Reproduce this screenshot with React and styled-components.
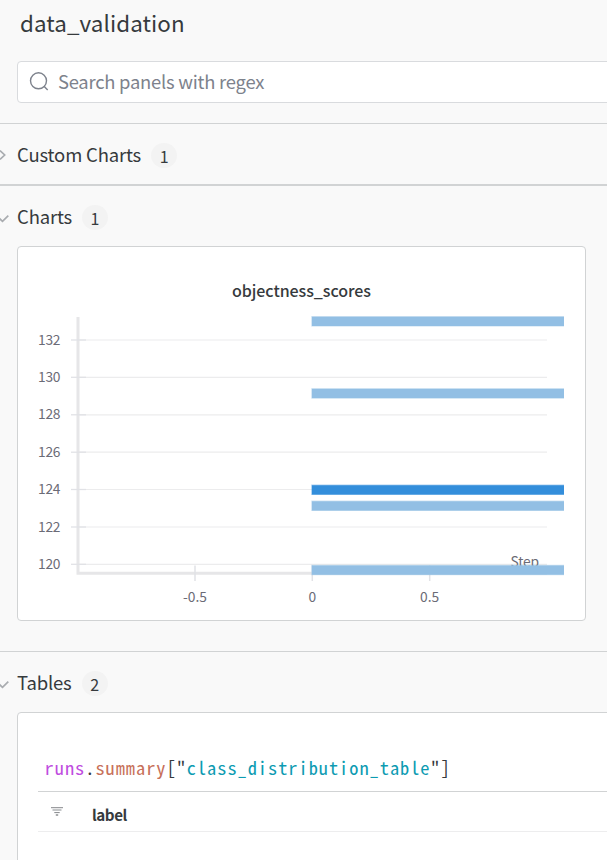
import React from "react";
import styled, { createGlobalStyle } from "styled-components";

const sans = '"Noto Sans CJK JP", "Noto Sans CJK SC", "Noto Sans", sans-serif';

const Global = createGlobalStyle`
  * { box-sizing: border-box; }
  html, body { margin: 0; background: #f9f9f9; overflow: hidden; }
  body { font-family: ${sans}; color: #363a3d; }
`;

const Page = styled.main`
  width: 607px;
  height: 860px;
  overflow: hidden;
  background: #f9f9f9;
`;

const Header = styled.header`
  height: 124px;
  border-bottom: 1px solid #d1d3d4;
`;

const Title = styled.h1`
  margin: 0;
  padding: 4px 0 0 20px;
  height: 61px;
  font-size: 22.4px;
  font-weight: 400;
  line-height: 36px;
  letter-spacing: 0.08px;
`;

const Search = styled.label`
  display: flex;
  align-items: center;
  width: 640px;
  height: 42px;
  margin-left: 17px;
  padding-left: 11px;
  border: 1px solid #d9dbde;
  border-radius: 4px;
  background: #fff;
`;

const SearchText = styled.span`
  margin-left: 8px;
  padding-bottom: 2px;
  font-size: 18.4px;
  letter-spacing: -0.24px;
  line-height: 28px;
  color: #7d828c;
`;

const Section = styled.section`
  height: ${(p) => p.$height}px;
  border-bottom: ${(p) => p.$border}px solid #d1d3d4;
`;

const SectionHead = styled.div`
  display: flex;
  align-items: center;
  height: ${(p) => p.$height}px;
`;

const ArrowSlot = styled.span`
  display: flex;
  width: 17px;
  flex: none;
  padding-top: ${(p) => (p.$open ? 4 : 2)}px;
`;

const SectionTitle = styled.h2`
  margin: 0;
  font-size: 18.5px;
  font-weight: 400;
  line-height: 28px;
  letter-spacing: -0.17px;
`;

const Count = styled.span`
  display: flex;
  align-items: center;
  justify-content: center;
  width: 26px;
  height: 25px;
  margin: 3px 0 0 10px;
  border-radius: 13px;
  background: #f3f3f3;
  font-size: 16px;
  line-height: 24px;
`;

const ChartCard = styled.div`
  width: 569px;
  height: 375px;
  margin-left: 17px;
  border: 1px solid #d1d3d4;
  border-radius: 4px;
  background: #fff;
`;

const ChartSvg = styled.svg`
  display: block;
  font-family: ${sans};
`;

const TickText = styled.text`
  font-size: 13.8px;
  fill: #6b6b76;
`;

const ChartTitle = styled.text`
  font-size: 16px;
  font-weight: 500;
  fill: #363a3d;
`;

const TableCard = styled.div`
  width: 640px;
  height: 200px;
  margin-left: 17px;
  padding: 40px 0 0 20px;
  border: 1px solid #d1d3d4;
  border-radius: 4px;
  background: #fff;
`;

const Query = styled.div`
  height: 39px;
  padding-left: 6.6px;
  border-bottom: 1px solid #d1d3d4;
  font-family: "Noto Sans Mono CJK JP", "DejaVu Sans Mono", monospace;
  font-size: 18.4px;
  letter-spacing: 0.96px;
  line-height: 28px;
  white-space: pre;
`;

const Token = styled.span`
  color: ${(p) => p.$color};
`;

const TableHead = styled.div`
  display: flex;
  align-items: center;
  height: 40px;
  padding-left: 13px;
  border-bottom: 1px solid #ededee;
`;

const ColumnName = styled.span`
  margin: 4px 0 0 29px;
  font-size: 15.2px;
  font-weight: 700;
  letter-spacing: -0.45px;
  line-height: 24px;
`;

const FilterSvg = styled.svg`
  margin-bottom: 1px;
`;

const yTicks = [
  [132, 340], [130, 377.3], [128, 414.8], [126, 452.2],
  [124, 489.5], [122, 527], [120, 564.3],
];
const xTicks = [["-0.5", 195], ["0", 312.3], ["0.5", 429.7]];
const bars = [
  [316.3, 10, "#92bfe4"], [388.4, 10, "#92bfe4"], [484.8, 10, "#338edb"],
  [500.8, 10, "#92bfe4"], [565, 10, "#92bfe4"],
];

function Chart() {
  return (
    <ChartSvg width="567" height="373" viewBox="18 247 567 373">
      <ChartTitle x="301.5" y="297" textAnchor="middle" textLength="139">objectness_scores</ChartTitle>
      {yTicks.map(([n, y]) => (
        <g key={n}>
          <path d={`M78 ${y}H547`} stroke="#ececed" strokeWidth="1.2" />
          <TickText x="38" y={Math.floor(y + 5)} textLength="22.5">{n}</TickText>
        </g>
      ))}
      <path d="M78 317V573.3H547" fill="none" stroke="#e6e6e8" strokeWidth="3" />
      {yTicks.map(([n, y]) => (
        <path key={n} d={`M71 ${y}H86`} stroke="#e1e2e6" strokeWidth="1.3" />
      ))}
      {xTicks.map(([n, x]) => (
        <g key={n}>
          <path d={`M${x} 565.5V581`} stroke="#e1e2e6" strokeWidth="1.5" />
          <TickText x={x} y="602" textAnchor="middle">{n}</TickText>
        </g>
      ))}
      <TickText x="510.5" y="566.6" textLength="28.5">Step</TickText>
      {bars.map(([y, h, color]) => (
        <g key={y}>
          <rect x="311.3" y={y - 0.2} width="252.7" height={h + 0.4} fill={color} opacity="0.5" />
          <rect x="312" y={y + 0.5} width="252" height={h - 0.8} fill={color} />
        </g>
      ))}
    </ChartSvg>
  );
}

function Arrow({ open }) {
  return (
    <svg width="10" height="14" viewBox="0 0 10 14" fill="none" stroke="#a9acb0" strokeWidth="1.7">
      <path d={open ? "M-1 7L2.5 10.4L8.3 4.6" : "M0 2.5L4.7 7L0 11.5"} />
    </svg>
  );
}

function Heading({ title, count, open, height }) {
  return (
    <SectionHead $height={height}>
      <ArrowSlot $open={open}><Arrow open={open} /></ArrowSlot>
      <SectionTitle>{title}</SectionTitle>
      <Count>{count}</Count>
    </SectionHead>
  );
}

export default function App() {
  return (
    <Page>
      <Global />
      <Header>
        <Title>data_validation</Title>
        <Search>
          <svg width="21" height="21" viewBox="0 0 21 21" fill="none" stroke="#7d828c" strokeWidth="1.4">
            <circle cx="9.5" cy="8.8" r="8" />
            <path d="M15 14.3L18.7 18" />
          </svg>
          <SearchText>Search panels with regex</SearchText>
        </Search>
      </Header>
      <Section $height={62} $border={2}>
        <Heading title="Custom Charts" count={1} height={60} />
      </Section>
      <Section $height={466} $border={1}>
        <Heading title="Charts" count={1} open height={60} />
        <ChartCard><Chart /></ChartCard>
      </Section>
      <section>
        <Heading title="Tables" count={2} open height={60} />
        <TableCard>
          <Query>
            <Token $color="#c04de0">runs</Token>
            <Token $color="#363a3d">.</Token>
            <Token $color="#c7705a">summary</Token>
            <Token $color="#363a3d">["</Token>
            <Token $color="#0d9bb2">class_distribution_table</Token>
            <Token $color="#363a3d">"]</Token>
          </Query>
          <TableHead>
            <FilterSvg width="12" height="9" viewBox="0 0 12 9" fill="none">
              <path d="M0 .7H12" stroke="#85878b" />
              <path d="M1.5 3H10.5" stroke="#c4c6c8" strokeWidth="2" />
              <path d="M3.3 5.6H8.7" stroke="#85878b" />
              <path d="M4.8 8H7.2" stroke="#55585c" />
            </FilterSvg>
            <ColumnName>label</ColumnName>
          </TableHead>
        </TableCard>
      </section>
    </Page>
  );
}
